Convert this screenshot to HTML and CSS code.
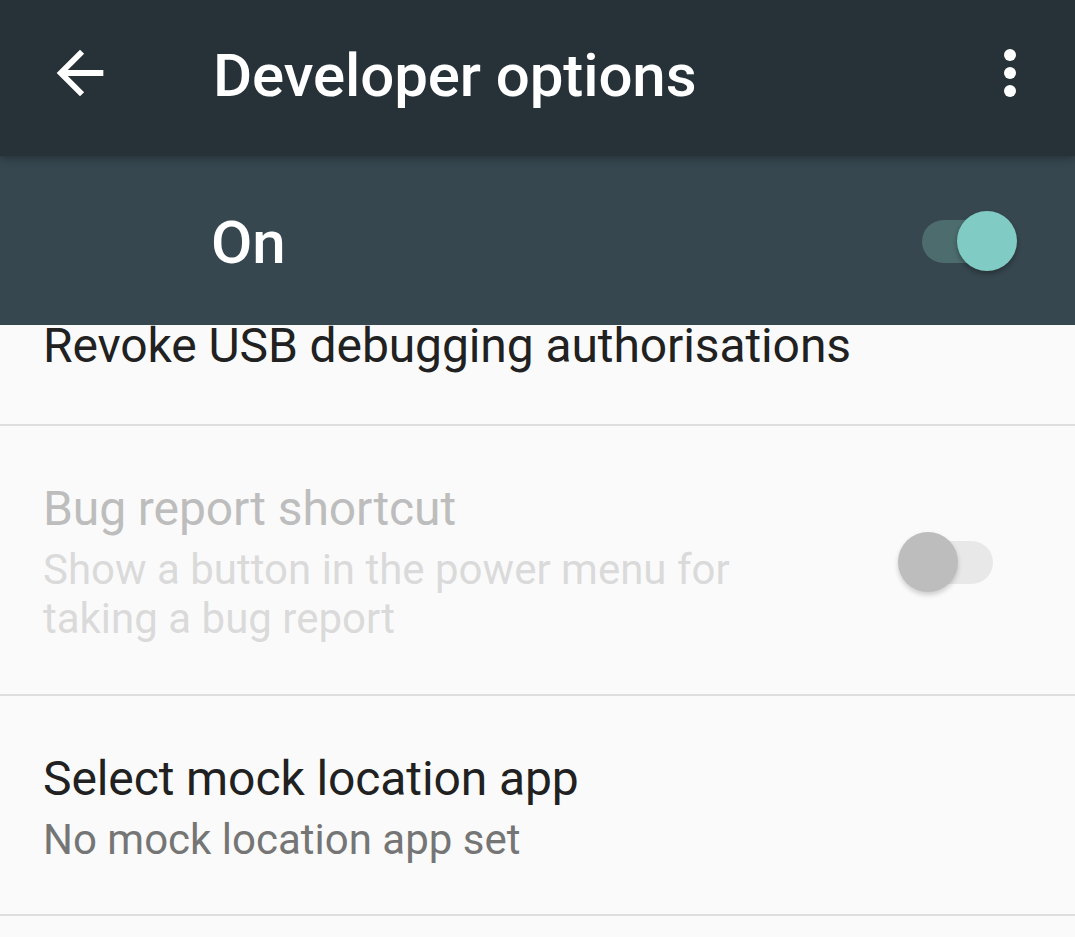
FILE: index.html
```html
<!DOCTYPE html>
<html lang="en">
<head>
<meta charset="utf-8">
<title>Developer options</title>
<link rel="stylesheet" href="styles.css">
</head>
<body>
<div class="screen">
  <header class="appbar">
    <div class="toolbar">
      <svg class="nav-icon" viewBox="0 0 24 24" aria-hidden="true">
        <path d="M20 11H7.83l5.59-5.59L12 4l-8 8 8 8 1.41-1.41L7.83 13H20v-2z"/>
      </svg>
      <h1 class="toolbar-title">Developer options</h1>
      <svg class="menu-icon" viewBox="0 0 24 24" aria-hidden="true">
        <circle cx="12" cy="6" r="2"/>
        <circle cx="12" cy="12" r="2"/>
        <circle cx="12" cy="18" r="2"/>
      </svg>
    </div>
    <div class="master-switch">
      <span class="master-label">On</span>
      <span class="switch switch-on"><span class="track"></span><span class="thumb"></span></span>
    </div>
  </header>

  <main class="pref-list">
    <div class="pref pref-first">
      <div class="pref-text">
        <div class="pref-title">Revoke USB debugging authorisations</div>
      </div>
    </div>
    <div class="divider"></div>
    <div class="pref pref-disabled">
      <div class="pref-text">
        <div class="pref-title">Bug report shortcut</div>
        <div class="pref-summary">Show a button in the power menu for taking a bug report</div>
      </div>
      <span class="switch switch-off"><span class="track"></span><span class="thumb"></span></span>
    </div>
    <div class="divider"></div>
    <div class="pref pref-last">
      <div class="pref-text">
        <div class="pref-title">Select mock location app</div>
        <div class="pref-summary">No mock location app set</div>
      </div>
    </div>
    <div class="divider"></div>
  </main>
</div>
</body>
</html>
```

FILE: styles.css
```css
* {
  box-sizing: border-box;
}

html, body {
  margin: 0;
  padding: 0;
  background: #fafafa;
}

body {
  font-family: Roboto, "Noto Sans", "Liberation Sans", sans-serif;
  width: 1075px;
  height: 937px;
  overflow: hidden;
}

.screen {
  display: flex;
  flex-direction: column;
  height: 937px;
}

/* ---- app bar ---- */
.appbar {
  position: relative;
  z-index: 2;
  flex: none;
}

.toolbar {
  position: relative;
  z-index: 1;
  height: 156px;
  padding: 0 29px 10px 45px;
  display: flex;
  align-items: center;
  background: #263238;
  box-shadow: 0 3px 8px rgba(0, 0, 0, 0.28);
}

.nav-icon {
  width: 70px;
  height: 70px;
  fill: #ffffff;
  flex: none;
}

.toolbar-title {
  margin: 6px 0 0 98px;
  flex: 1;
  font-size: 60px;
  line-height: 70px;
  font-weight: 500;
  color: #ffffff;
  letter-spacing: -0.1px;
}

.menu-icon {
  width: 72px;
  height: 72px;
  fill: #ffffff;
  flex: none;
}

.master-switch {
  height: 169px;
  padding: 0 58px 0 211px;
  display: flex;
  align-items: center;
  justify-content: space-between;
  background: #37474f;
}

.master-label {
  font-size: 60px;
  line-height: 70px;
  font-weight: 500;
  color: #ffffff;
  margin-top: 4px;
}

/* ---- switches ---- */
.switch {
  position: relative;
  width: 95px;
  height: 60px;
  flex: none;
}

.switch .track {
  position: absolute;
  top: 9px;
  height: 43px;
  width: 90px;
  border-radius: 22px;
}

.switch .thumb {
  position: absolute;
  top: 0;
  width: 60px;
  height: 60px;
  border-radius: 50%;
  box-shadow: 0 3px 5px rgba(0, 0, 0, 0.3);
}

.switch-on .track {
  left: 0;
  background: #4d6c6e;
}

.switch-on .thumb {
  right: 0;
  background: #80cbc4;
}

.switch-off .track {
  right: 0;
  background: #e8e8e8;
}

.switch-off .thumb {
  left: 0;
  background: #bdbdbd;
  box-shadow: 0 3px 5px rgba(0, 0, 0, 0.18);
}

/* ---- preference list ---- */
.pref-list {
  flex: 1;
  background: #fafafa;
}

.pref {
  display: flex;
  align-items: center;
  padding: 55px 82px 51px 43px;
}

/* partly scrolled under the app bar: only the title line shows */
.pref-first {
  padding-top: 0;
  padding-bottom: 58px;
}

.pref-first .pref-title {
  line-height: 41px;
}

.pref-last {
  padding-bottom: 50px;
}

.pref-text {
  flex: 1;
  margin-right: 60px;
}

.pref-title {
  font-size: 48px;
  line-height: 56px;
  color: #212121;
  white-space: nowrap;
  letter-spacing: -0.1px;
}

.pref-summary {
  margin-top: 8px;
  font-size: 42px;
  line-height: 49px;
  color: #757575;
}

.pref-disabled .pref-title {
  color: #bdbdbd;
}

.pref-disabled .pref-summary {
  color: #dadada;
}

.divider {
  height: 2px;
  background: #dedede;
}
```
